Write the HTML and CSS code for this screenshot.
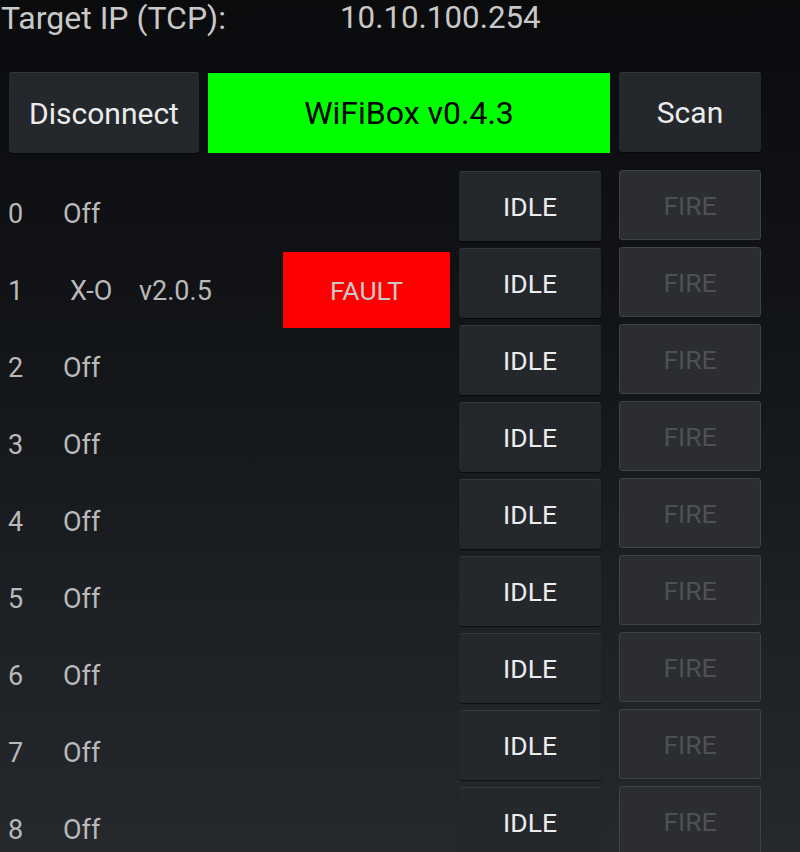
FILE: index.html
```html
<!DOCTYPE html>
<html>
<head>
<meta charset="utf-8">
<link rel="stylesheet" href="styles.css">
</head>
<body>
<div class="screen">
  <div class="header">
    <span class="label">Target IP (TCP):</span>
    <span class="ip">10.10.100.254</span>
  </div>
  <div class="toolbar">
    <div class="btn btn-disconnect">Disconnect</div>
    <div class="title">WiFiBox v0.4.3</div>
    <div class="btn btn-scan">Scan</div>
  </div>
  <div class="rows">
    <div class="row"><span class="num">0</span><span class="name">Off</span><span class="ver"></span><span class="status"></span><div class="btn idle">IDLE</div><div class="fire">FIRE</div></div>
    <div class="row"><span class="num">1</span><span class="name name-dev">X-O</span><span class="ver">v2.0.5</span><span class="status fault">FAULT</span><div class="btn idle">IDLE</div><div class="fire">FIRE</div></div>
    <div class="row"><span class="num">2</span><span class="name">Off</span><span class="ver"></span><span class="status"></span><div class="btn idle">IDLE</div><div class="fire">FIRE</div></div>
    <div class="row"><span class="num">3</span><span class="name">Off</span><span class="ver"></span><span class="status"></span><div class="btn idle">IDLE</div><div class="fire">FIRE</div></div>
    <div class="row"><span class="num">4</span><span class="name">Off</span><span class="ver"></span><span class="status"></span><div class="btn idle">IDLE</div><div class="fire">FIRE</div></div>
    <div class="row"><span class="num">5</span><span class="name">Off</span><span class="ver"></span><span class="status"></span><div class="btn idle">IDLE</div><div class="fire">FIRE</div></div>
    <div class="row"><span class="num">6</span><span class="name">Off</span><span class="ver"></span><span class="status"></span><div class="btn idle">IDLE</div><div class="fire">FIRE</div></div>
    <div class="row"><span class="num">7</span><span class="name">Off</span><span class="ver"></span><span class="status"></span><div class="btn idle">IDLE</div><div class="fire">FIRE</div></div>
    <div class="row"><span class="num">8</span><span class="name">Off</span><span class="ver"></span><span class="status"></span><div class="btn idle">IDLE</div><div class="fire">FIRE</div></div>
  </div>
</div>
</body>
</html>
```
FILE: styles.css
```css
html, body {
  margin: 0;
  padding: 0;
}
body {
  width: 800px;
  height: 852px;
  overflow: hidden;
  font-family: Roboto, "Noto Sans", sans-serif;
  background: linear-gradient(to bottom, #0a0b0d 0%, #111316 35%, #1c1f23 70%, #25292e 100%);
  color: #c2c2c2;
}
.screen {
  display: flex;
  flex-direction: column;
}
.header {
  display: grid;
  grid-template-columns: 339px auto;
  padding-left: 1px;
  height: 36px;
  font-size: 32px;
  line-height: 36px;
  color: #c8c8c8;
}
.ip {
  font-size: 31.3px;
}
.toolbar {
  display: flex;
  align-items: flex-start;
  margin-top: 36px;
  padding-left: 9px;
  height: 98px;
}
.btn {
  box-sizing: border-box;
  background: #24282c;
  border-top: 1px solid #34383c;
  border-radius: 3px;
  box-shadow: 0 1px 1px rgba(0,0,0,0.6);
  display: flex;
  align-items: center;
  justify-content: center;
  color: #ececec;
  font-size: 30px;
}
.btn-disconnect {
  width: 190px;
  height: 81px;
}
.title {
  margin-left: 9px;
  margin-top: 1px;
  width: 402px;
  height: 80px;
  background: #00ff00;
  color: #000;
  font-size: 32px;
  display: flex;
  align-items: center;
  justify-content: center;
}
.btn-scan {
  margin-left: 9px;
  width: 142px;
  height: 80px;
}
.rows {
  display: flex;
  flex-direction: column;
}
.row {
  display: grid;
  grid-template-columns: 55px 76px 144px 167px 151px 160px;
  padding-left: 8px;
  height: 77px;
  align-items: start;
  font-size: 27px;
  color: #b9b9b9;
}
.num, .name, .ver {
  margin-top: 29px;
  line-height: 30px;
}
.name-dev {
  padding-left: 7px;
}
.status {
  margin-top: 5px;
  height: 76px;
}
.fault {
  background: #ff0000;
  color: #c8c8c8;
  display: flex;
  align-items: center;
  justify-content: center;
  font-size: 26.5px;
}
.idle {
  margin-left: 9px;
  margin-top: 1px;
  width: 142px;
  height: 70px;
  font-size: 26.5px;
}
.fire {
  box-sizing: border-box;
  margin-left: 18px;
  width: 142px;
  height: 70px;
  background: #2b2d30;
  border: 1px solid #404346;
  border-radius: 3px;
  display: flex;
  align-items: center;
  justify-content: center;
  color: #4e5154;
  font-size: 26.5px;
}
```
